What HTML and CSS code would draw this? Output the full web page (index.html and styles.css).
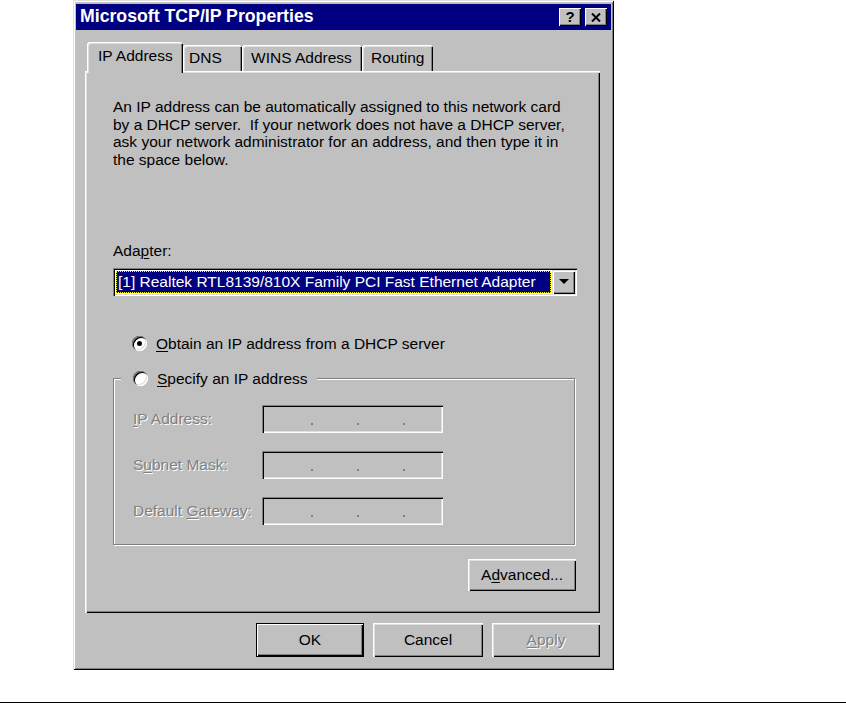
FILE: index.html
```html
<!DOCTYPE html>
<html lang="en">
<head>
  <meta charset="UTF-8" />
  <meta name="viewport" content="width=device-width, initial-scale=1.0"/>
  <title>Microsoft TCP/IP Properties</title>
  <link rel="stylesheet" href="styles.css">
</head>
<body>

  <div class="dialog">
    <div class="titlebar">
      <span class="title">Microsoft TCP/IP Properties</span>
      <div class="caption-buttons">
        <button class="cap-btn">?</button>
        <button class="cap-btn">
          <svg width="10" height="9" viewBox="0 0 10 9">
            <path d="M1 0.5 L9 8.5 M9 0.5 L1 8.5" stroke="#000" stroke-width="2"/>
          </svg>
        </button>
      </div>
    </div>

    <div class="dialog-body">
      <div class="tabs">
        <div class="tab active">IP Address</div>
        <div class="tab tab-dns">DNS</div>
        <div class="tab tab-wins">WINS Address</div>
        <div class="tab tab-routing">Routing</div>
      </div>

      <div class="panel">
        <p class="intro">
          An IP address can be automatically assigned to this network card<br>
          by a DHCP server.&nbsp; If your network does not have a DHCP server,<br>
          ask your network administrator for an address, and then type it in<br>
          the space below.
        </p>

        <div class="field-label">Ada<u>p</u>ter:</div>
        <div class="select">
          <div class="select-value">[1] Realtek RTL8139/810X Family PCI Fast Ethernet Adapter</div>
          <div class="select-arrow"><span class="triangle"></span></div>
        </div>

        <div class="radio-row obtain">
          <span class="radio checked"></span>
          <span><u>O</u>btain an IP address from a DHCP server</span>
        </div>

        <div class="group">
          <div class="radio-row legend">
            <span class="radio"></span>
            <span><u>S</u>pecify an IP address</span>
          </div>

          <div class="ip-grid">
            <span class="disabled-label"><u>I</u>P Address:</span>
            <div class="ip-input">
              <span class="seg"></span><span class="dot"></span>
              <span class="seg"></span><span class="dot"></span>
              <span class="seg"></span><span class="dot"></span>
            </div>

            <span class="disabled-label">S<u>u</u>bnet Mask:</span>
            <div class="ip-input">
              <span class="seg"></span><span class="dot"></span>
              <span class="seg"></span><span class="dot"></span>
              <span class="seg"></span><span class="dot"></span>
            </div>

            <span class="disabled-label">Default <u>G</u>ateway:</span>
            <div class="ip-input">
              <span class="seg"></span><span class="dot"></span>
              <span class="seg"></span><span class="dot"></span>
              <span class="seg"></span><span class="dot"></span>
            </div>
          </div>
        </div>

        <div class="advanced-row">
          <button class="btn btn-advanced">A<u>d</u>vanced...</button>
        </div>
      </div>

      <div class="footer">
        <button class="btn btn-default">OK</button>
        <button class="btn btn-cancel">Cancel</button>
        <button class="btn btn-apply" disabled><u>A</u>pply</button>
      </div>
    </div>
  </div>

  <div class="page-rule"></div>

</body>
</html>
```

FILE: styles.css
```css
body {
  margin: 0;
  background-color: #fff;
  font-family: "Liberation Sans", Arial, sans-serif;
  font-size: 15.5px;
  line-height: 17.6px;
  color: #000;
}

u {
  text-decoration-thickness: 1px;
  text-underline-offset: 2px;
}

button {
  font: inherit;
  color: inherit;
  border: none;
  padding: 0;
  margin: 0;
  background: none;
}

/* Window frame */
.dialog {
  box-sizing: border-box;
  width: 541px;
  height: 670px;
  margin-left: 73px;
  padding: 4px 3px 0;
  background-color: #c0c0c0;
  box-shadow:
    inset 1px 1px 0 #dfdfdf,
    inset -1px -1px 0 #000,
    inset 2px 2px 0 #fff,
    inset -2px -2px 0 #808080;
}

.titlebar {
  height: 26px;
  background-color: #000080;
  display: flex;
  align-items: center;
  justify-content: space-between;
  padding: 0 4px;
}

.title {
  color: #fff;
  font-weight: bold;
  font-size: 17.7px;
}

.caption-buttons {
  display: flex;
  gap: 4px;
}

.cap-btn {
  width: 22px;
  height: 18px;
  background-color: #c0c0c0;
  display: flex;
  align-items: center;
  justify-content: center;
  font-weight: bold;
  font-size: 15px;
  box-shadow:
    inset 1px 1px 0 #fff,
    inset -1px -1px 0 #000,
    inset -2px -2px 0 #808080;
}

.dialog-body {
  padding: 12px 11px 0 9px;
}

/* Tabs */
.tabs {
  display: flex;
  align-items: flex-end;
  height: 29px;
  margin-left: 2px;
}

.tab {
  box-sizing: border-box;
  height: 26px;
  display: flex;
  align-items: center;
  padding-left: 10px;
  border-radius: 3px 3px 0 0;
  box-shadow:
    inset 1px 1px 0 #fff,
    inset 2px 2px 0 #dfdfdf,
    inset -1px 0 0 #000,
    inset -2px 0 0 #808080;
}

.tab.active {
  width: 96px;
  height: 31px;
  margin-bottom: -2px;
  padding-left: 11px;
  padding-bottom: 3px;
  background-color: #c0c0c0;
  position: relative;
  z-index: 1;
}

.tab-dns { width: 59px; padding-left: 6px; }
.tab-wins { width: 120px; padding-left: 9px; }
.tab-routing { width: 71px; padding-left: 9px; }

/* Tab page */
.panel {
  box-sizing: border-box;
  height: 542px;
  padding: 27px 24px 0 28px;
  box-shadow:
    inset 1px 1px 0 #fff,
    inset 2px 2px 0 #dfdfdf,
    inset -1px -1px 0 #000,
    inset -2px -2px 0 #808080;
}

.intro {
  margin: 0;
  white-space: nowrap;
}

.field-label {
  margin-top: 74px;
}

.select {
  box-sizing: border-box;
  height: 28px;
  margin-top: 8px;
  margin-right: -1px;
  padding: 2px;
  display: flex;
  background-color: #fff;
  box-shadow:
    inset 1px 1px 0 #808080,
    inset 2px 2px 0 #000,
    inset -1px -1px 0 #fff,
    inset -2px -2px 0 #dfdfdf;
}

.select-value {
  flex: 1;
  margin: 1px;
  padding-left: 2px;
  background-color: #000080;
  color: #fff;
  outline: 1px dotted #ffff00;
  outline-offset: -1px;
  line-height: 22px;
  white-space: nowrap;
}

.select-arrow {
  width: 23px;
  background-color: #c0c0c0;
  display: flex;
  align-items: center;
  justify-content: center;
  box-shadow:
    inset 1px 1px 0 #dfdfdf,
    inset 2px 2px 0 #fff,
    inset -1px -1px 0 #000,
    inset -2px -2px 0 #808080;
}

.triangle {
  width: 0;
  height: 0;
  border-left: 5px solid transparent;
  border-right: 5px solid transparent;
  border-top: 5px solid #000;
}

/* Radio buttons */
.radio-row {
  display: flex;
  align-items: center;
  gap: 9px;
  height: 17.6px;
}

.obtain {
  margin-top: 39px;
  padding-left: 19px;
}

.radio {
  width: 15px;
  height: 15px;
  border-radius: 50%;
  background-color: #fff;
  display: flex;
  align-items: center;
  justify-content: center;
  box-shadow:
    inset 1px 1px 0 #808080,
    inset 2px 2px 0 #000,
    inset -1px -1px 0 #fff,
    inset -2px -2px 0 #dfdfdf;
}

.radio.checked::after {
  content: "";
  width: 5px;
  height: 5px;
  border-radius: 50%;
  background-color: #000;
}

/* Group box */
.group {
  margin-top: 25.4px;
  margin-right: 1px;
  padding: 0 0 19px 19px;
  border: 1px solid #808080;
  box-shadow: inset 1px 1px 0 #fff, 1px 1px 0 #fff;
}

.legend {
  width: fit-content;
  margin: -9px 0 0 -12px;
  padding: 0 9px 0 12px;
  background-color: #c0c0c0;
}

.ip-grid {
  display: grid;
  grid-template-columns: 129px 181px;
  grid-auto-rows: 28px;
  row-gap: 18px;
  align-items: center;
  margin-top: 17.4px;
}

.disabled-label {
  color: #808080;
  text-shadow: 1px 1px 0 #fff;
  white-space: nowrap;
}

.ip-input {
  box-sizing: border-box;
  height: 28px;
  padding: 2px 0 2px 5px;
  display: flex;
  align-items: flex-end;
  box-shadow:
    inset 1px 1px 0 #808080,
    inset 2px 2px 0 #000,
    inset -1px -1px 0 #fff,
    inset -2px -2px 0 #dfdfdf;
}

.seg {
  width: 44px;
}

.dot {
  width: 2px;
  height: 2px;
  margin-bottom: 6px;
  background-color: #808080;
}

/* Buttons */
.btn {
  box-sizing: border-box;
  height: 34px;
  background-color: #c0c0c0;
  text-align: center;
  box-shadow:
    inset 1px 1px 0 #fff,
    inset 2px 2px 0 #dfdfdf,
    inset -1px -1px 0 #000,
    inset -2px -2px 0 #808080;
}

.advanced-row {
  display: flex;
  justify-content: flex-end;
  margin-top: 14px;
}

.btn-advanced {
  width: 108px;
  height: 32px;
}

.footer {
  display: flex;
  justify-content: flex-end;
  gap: 9px;
  margin-top: 10px;
}

.btn-default {
  width: 108px;
  box-shadow:
    inset 1px 1px 0 #000,
    inset -1px -1px 0 #000,
    inset 2px 2px 0 #fff,
    inset -2px -2px 0 #000,
    inset -3px -3px 0 #808080;
}

.btn-cancel { width: 110px; }

.btn-apply {
  width: 108px;
  color: #808080;
  text-shadow: 1px 1px 0 #fff;
}

.page-rule {
  height: 1px;
  margin-top: 32px;
  background-color: #000;
}
```
